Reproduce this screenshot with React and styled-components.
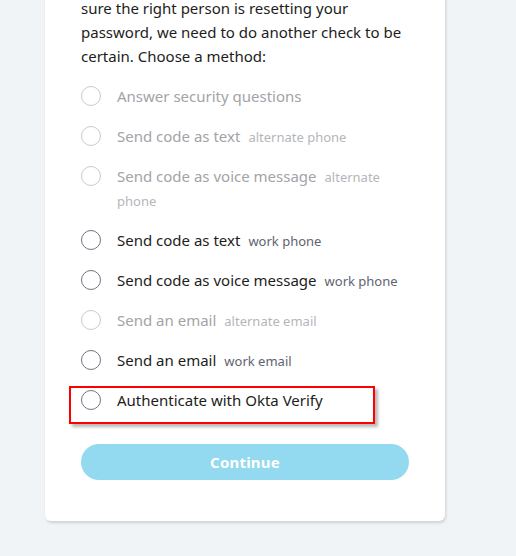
import React from 'react';
import styled, { createGlobalStyle } from 'styled-components';

const GlobalStyle = createGlobalStyle`
  html, body {
    margin: 0;
    padding: 0;
    background: #f1f4f7;
    overflow: hidden;
  }
  body {
    font-family: 'Noto Sans', 'Open Sans', sans-serif;
  }
`;

const Page = styled.div`
  width: 516px;
  height: 556px;
  position: relative;
`;

const Card = styled.div`
  margin-top: -20px;
  margin-left: 45px;
  width: 400px;
  box-sizing: border-box;
  padding: 16px 36px 41px 36px;
  background: #fff;
  border-radius: 6px;
  box-shadow: 1px 2px 3px rgba(0, 0, 0, 0.14);
`;

const Intro = styled.p`
  margin: 0 0 16px;
  font-size: 15px;
  line-height: 24px;
  color: #1d1d21;
`;

const Methods = styled.div`
  display: flex;
  flex-direction: column;
  gap: 16px;
`;

const Method = styled.label`
  position: relative;
  display: grid;
  grid-template-columns: 20px 1fr;
  column-gap: 16px;
  align-items: start;
  cursor: ${(p) => (p.$disabled ? 'default' : 'pointer')};
`;

const Circle = styled.span`
  width: 20px;
  height: 20px;
  margin-top: 2px;
  box-sizing: border-box;
  border-radius: 50%;
  border: 1.5px solid ${(p) => (p.$disabled ? '#c8cacf' : '#6e7580')};
  background: #fff;
`;

const Label = styled.span`
  font-size: 15px;
  line-height: 24px;
  color: ${(p) => (p.$disabled ? '#a3a3a8' : '#1d1d21')};
`;

const Hint = styled.span`
  margin-left: 8px;
  font-size: 13px;
  line-height: 1;
  color: ${(p) => (p.$disabled ? '#b4b6bb' : '#5e6370')};
`;

const Highlight = styled.div`
  position: absolute;
  left: -12px;
  top: -2px;
  width: 306px;
  height: 38px;
  border: 2px solid #ff0000;
  box-sizing: border-box;
  box-shadow: 3px 3px 3px rgba(0, 0, 0, 0.28);
  pointer-events: none;
`;

const Button = styled.button`
  display: block;
  width: 100%;
  height: 36px;
  margin-top: 32px;
  border: none;
  border-radius: 18px;
  background: #93d9ef;
  color: #fff;
  font-family: 'Noto Sans', 'Open Sans', sans-serif;
  font-size: 15px;
  font-weight: 700;
  letter-spacing: 0.2px;
  cursor: default;
`;

const methods = [
  { label: 'Answer security questions', disabled: true },
  { label: 'Send code as text', hint: 'alternate phone', disabled: true },
  { label: 'Send code as voice message', hint: 'alternate phone', disabled: true },
  { label: 'Send code as text', hint: 'work phone' },
  { label: 'Send code as voice message', hint: 'work phone' },
  { label: 'Send an email', hint: 'alternate email', disabled: true },
  { label: 'Send an email', hint: 'work email' },
  { label: 'Authenticate with Okta Verify', highlight: true },
];

export default function App() {
  return (
    <Page>
      <GlobalStyle />
      <Card>
        <Intro>
          sure the right person is resetting your password, we need to do another check to be
          certain. Choose a method:
        </Intro>
        <Methods>
          {methods.map((m, i) => (
            <Method key={i} $disabled={m.disabled}>
              <Circle $disabled={m.disabled} />
              <Label $disabled={m.disabled}>
                {m.label}
                {m.hint && <Hint $disabled={m.disabled}>{m.hint}</Hint>}
              </Label>
              {m.highlight && <Highlight />}
            </Method>
          ))}
        </Methods>
        <Button>Continue</Button>
      </Card>
    </Page>
  );
}
